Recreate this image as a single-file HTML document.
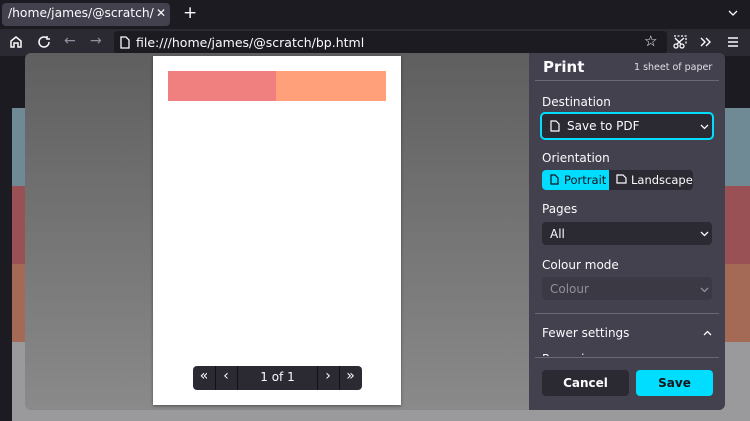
<!DOCTYPE html><html><head><style>
*{margin:0;padding:0;box-sizing:border-box}
body{width:750px;height:421px;overflow:hidden;background:#1c1b22;font-family:"DejaVu Sans","Liberation Sans",sans-serif;position:relative;color:#fbfbfe}
.abs{position:absolute}
</style></head><body>
<div class="abs" style="left:0;top:0;width:750px;height:29px;background:#1c1b22"></div>
<div class="abs" style="left:2px;top:3px;width:168px;height:23px;background:#42414d;border-radius:4px"></div>
<div class="abs" style="left:8px;top:6px;font-size:12.3px;white-space:nowrap;width:146px;overflow:hidden">/home/james/@scratch/bp.h</div>
<div class="abs" style="left:156px;top:6px;font-size:12px">✕</div>
<div class="abs" style="left:183px;top:3px;font-size:17px">+</div>
<svg class="abs" style="left:728px;top:10px" width="10" height="6" viewBox="0 0 10 6" fill="none" stroke="#fbfbfe" stroke-width="1.3"><path d="M1 1l4 4 4-4"/></svg>
<div class="abs" style="left:0;top:29px;width:750px;height:27px;background:#2b2a33"></div>
<div class="abs" style="left:114px;top:31px;width:553px;height:23px;background:#1c1b22;border-radius:4px"></div>
<svg class="abs" style="left:9px;top:35px" width="14" height="14" viewBox="0 0 14 14" fill="none" stroke="#fbfbfe" stroke-width="1.5"><path d="M2 6L7 2l5 4v6H9V8H5v4H2z"/></svg>
<svg class="abs" style="left:37px;top:35px" width="14" height="14" viewBox="0 0 14 14" fill="none" stroke="#fbfbfe" stroke-width="1.5"><path d="M12 7a5 5 0 1 1-2-4M10 1v3h3"/></svg>
<div class="abs" style="left:64px;top:33px;font-size:14px;color:#8f8f9d">←</div>
<div class="abs" style="left:90px;top:33px;font-size:14px;color:#8f8f9d">→</div>
<svg class="abs" style="left:120px;top:36px" width="10" height="13" viewBox="0 0 10 13" fill="none" stroke="#fbfbfe" stroke-width="1.3"><path d="M1 1h5l3 3v8H1z"/></svg>
<div class="abs" style="left:136px;top:35px;font-size:12.5px">file:///home/james/@scratch/bp.html</div>
<div class="abs" style="left:644px;top:32px;font-size:15px">☆</div>
<svg class="abs" style="left:672px;top:35px" width="16" height="14" viewBox="0 0 16 14" fill="none" stroke="#fbfbfe" stroke-width="1.3"><path d="M2 1h12v8" stroke-dasharray="2 1.5"/><circle cx="4" cy="11" r="2"/><circle cx="10" cy="11" r="2"/><path d="M5 9l7-6M9 9L3 3"/></svg>
<svg class="abs" style="left:700px;top:37px" width="12" height="10" viewBox="0 0 12 10" fill="none" stroke="#fbfbfe" stroke-width="1.4"><path d="M1 1l4 4-4 4M6 1l4 4-4 4"/></svg>
<svg class="abs" style="left:727px;top:37px" width="12" height="10" viewBox="0 0 12 10" fill="none" stroke="#fbfbfe" stroke-width="1.6"><path d="M1 1h10M1 5h10M1 9h10"/></svg>
<!-- background page -->
<div class="abs" style="left:12px;top:108px;width:738px;height:78px;background:#6f8a95"></div>
<div class="abs" style="left:12px;top:186px;width:738px;height:78px;background:#9a5155"></div>
<div class="abs" style="left:12px;top:264px;width:738px;height:78px;background:#a46a55"></div>
<div class="abs" style="left:12px;top:342px;width:738px;height:79px;background:#9a9a9c"></div>
<!-- dialog -->
<div class="abs" style="left:25px;top:53px;width:700px;height:357px;border-radius:6px;background:linear-gradient(#5f5f5f,#8a8a8a)"></div>
<div class="abs" style="left:153px;top:56px;width:248px;height:349px;background:#fff;box-shadow:0 1px 3px rgba(0,0,0,.4)"></div>
<div class="abs" style="left:168px;top:71px;width:108px;height:30px;background:#f08080"></div>
<div class="abs" style="left:276px;top:71px;width:110px;height:30px;background:#ffa07a"></div>
<div class="abs" style="left:193px;top:366px;width:169px;height:24px;background:#2b2a33;border-radius:4px;font-size:12px;color:#fbfbfe">
<div class="abs" style="left:0;top:2px;width:22px;text-align:center;font-size:14px">«</div>
<div class="abs" style="left:22px;top:0;width:1px;height:24px;background:#111"></div>
<div class="abs" style="left:22px;top:2px;width:22px;text-align:center;font-size:14px">‹</div>
<div class="abs" style="left:44px;top:0;width:1px;height:24px;background:#111"></div>
<div class="abs" style="left:45px;top:4px;width:79px;text-align:center">1 of 1</div>
<div class="abs" style="left:124px;top:0;width:1px;height:24px;background:#111"></div>
<div class="abs" style="left:124px;top:2px;width:22px;text-align:center;font-size:14px">›</div>
<div class="abs" style="left:146px;top:0;width:1px;height:24px;background:#111"></div>
<div class="abs" style="left:146px;top:2px;width:23px;text-align:center;font-size:14px">»</div>
</div>
<!-- sidebar -->
<div class="abs" style="left:529px;top:53px;width:196px;height:357px;background:#42414d;border-radius:0 6px 6px 0"></div>
<div class="abs" style="left:543px;top:58px;font-size:15px;font-weight:bold">Print</div>
<div class="abs" style="left:634px;top:62px;font-size:9.5px;color:#e0e0e6">1 sheet of paper</div>
<div class="abs" style="left:535px;top:80px;width:184px;height:1px;background:#6a6973"></div>
<div class="abs" style="left:542px;top:95px;font-size:12px">Destination</div>
<div class="abs" style="left:540px;top:112px;width:174px;height:28px;background:#2b2a33;border:2px solid #00ddff;border-radius:5px"></div>
<svg class="abs" style="left:550px;top:120px" width="10" height="12" viewBox="0 0 10 12" fill="none" stroke="#fbfbfe" stroke-width="1.2"><path d="M1 1h5l3 3v7H1z"/></svg>
<div class="abs" style="left:567px;top:119px;font-size:12px">Save to PDF</div>
<svg class="abs" style="left:700px;top:124px" width="9" height="6" viewBox="0 0 9 6" fill="none" stroke="#fbfbfe" stroke-width="1.3"><path d="M1 1l3.5 3.5L8 1"/></svg>
<div class="abs" style="left:542px;top:151px;font-size:12px">Orientation</div>
<div class="abs" style="left:542px;top:170px;width:151px;height:20px;background:#2b2a33;border-radius:4px"></div>
<div class="abs" style="left:542px;top:170px;width:67px;height:20px;background:#00ddff;border-radius:4px 0 0 4px"></div>
<svg class="abs" style="left:550px;top:174px" width="9" height="11" viewBox="0 0 9 11" fill="none" stroke="#15141a" stroke-width="1.2"><path d="M1 1h4l3 3v6H1z"/></svg>
<div class="abs" style="left:564px;top:173px;font-size:11.5px;color:#15141a">Portrait</div>
<svg class="abs" style="left:616px;top:174px" width="11" height="10" viewBox="0 0 11 10" fill="none" stroke="#fbfbfe" stroke-width="1.2"><path d="M1 1h6l3 3v5H1z"/></svg>
<div class="abs" style="left:631px;top:173px;font-size:11.5px">Landscape</div>
<div class="abs" style="left:542px;top:202px;font-size:12px">Pages</div>
<div class="abs" style="left:542px;top:222px;width:170px;height:23px;background:#2b2a33;border-radius:4px"></div>
<div class="abs" style="left:550px;top:227px;font-size:12px">All</div>
<svg class="abs" style="left:700px;top:231px" width="9" height="6" viewBox="0 0 9 6" fill="none" stroke="#fbfbfe" stroke-width="1.3"><path d="M1 1l3.5 3.5L8 1"/></svg>
<div class="abs" style="left:542px;top:258px;font-size:12px">Colour mode</div>
<div class="abs" style="left:542px;top:277px;width:170px;height:23px;background:#3b3a44;border-radius:4px"></div>
<div class="abs" style="left:550px;top:282px;font-size:12px;color:#8f8f9d">Colour</div>
<svg class="abs" style="left:700px;top:287px" width="9" height="6" viewBox="0 0 9 6" fill="none" stroke="#8f8f9d" stroke-width="1.3"><path d="M1 1l3.5 3.5L8 1"/></svg>
<div class="abs" style="left:535px;top:313px;width:184px;height:1px;background:#6a6973"></div>
<div class="abs" style="left:542px;top:326px;font-size:12px">Fewer settings</div>
<svg class="abs" style="left:703px;top:330px" width="9" height="6" viewBox="0 0 9 6" fill="none" stroke="#fbfbfe" stroke-width="1.3"><path d="M1 5l3.5-3.5L8 5"/></svg>
<div class="abs" style="left:542px;top:352px;width:170px;height:4px;overflow:hidden"><div style="font-size:12px">Page size</div></div>
<div class="abs" style="left:535px;top:357px;width:184px;height:1px;background:#6a6973"></div>
<div class="abs" style="left:542px;top:370px;width:87px;height:26px;background:#2b2a33;border-radius:4px;font-size:12px;font-weight:bold;text-align:center;line-height:26px">Cancel</div>
<div class="abs" style="left:636px;top:370px;width:77px;height:26px;background:#00ddff;border-radius:4px;font-size:12px;font-weight:bold;text-align:center;line-height:26px;color:#15141a">Save</div>
</body></html>
